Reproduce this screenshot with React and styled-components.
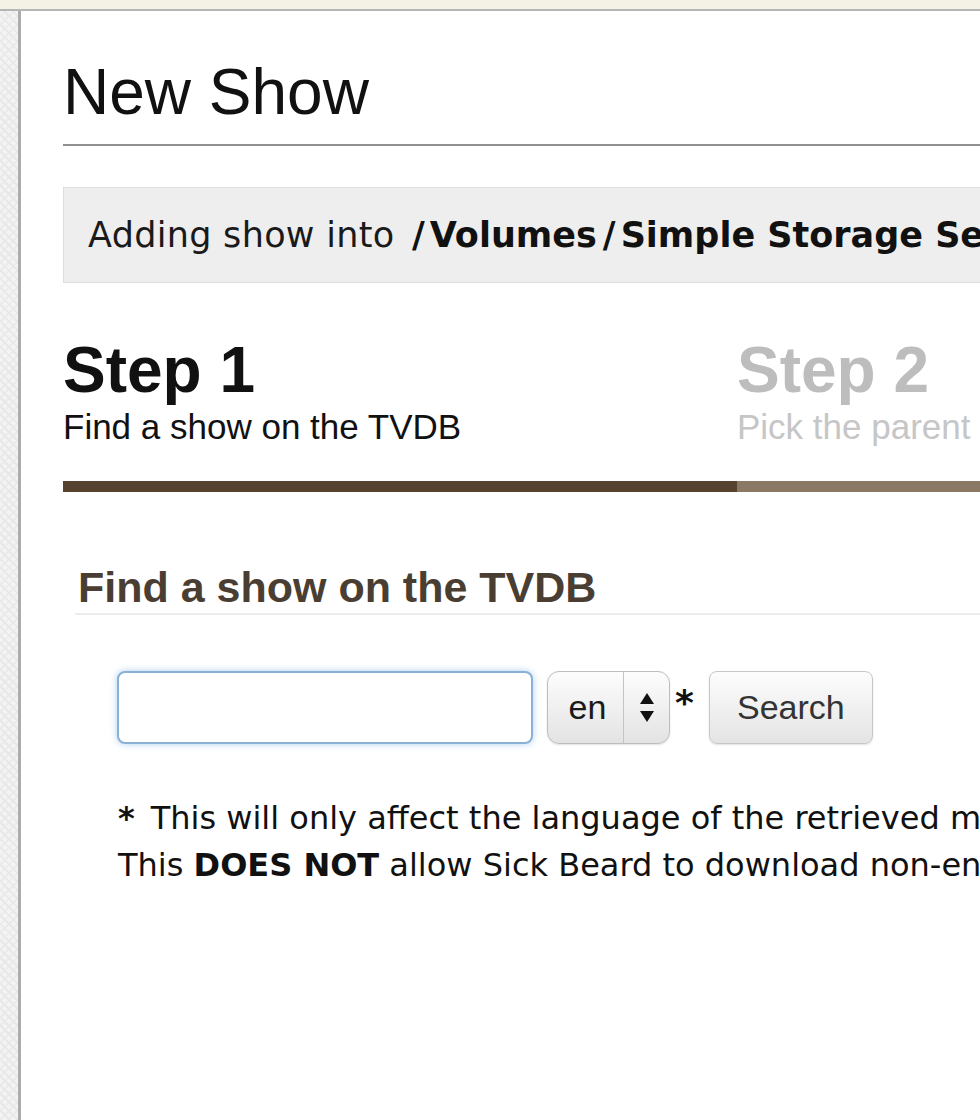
import styled, { createGlobalStyle } from 'styled-components';

const GlobalStyle = createGlobalStyle`
  html, body {
    margin: 0;
    padding: 0;
    background: #fff;
    overflow: hidden;
  }
  #root {
    width: 980px;
    height: 1120px;
    overflow: hidden;
  }
`;

const Page = styled.div`
  width: 980px;
  height: 1120px;
  display: flex;
  flex-direction: column;
  overflow: hidden;
`;

const TopStrip = styled.div`
  flex: none;
  height: 9px;
  background: #f4f1e5;
  border-bottom: 2px solid #b5b5b3;
`;

const Body = styled.div`
  flex: 1;
  display: flex;
  min-height: 0;
`;

const Gutter = styled.div`
  flex: none;
  width: 18px;
  border-right: 3px solid #acacac;
  background-color: #f3f3f3;
  background-image:
    repeating-linear-gradient(45deg, #e8e8e8 0 2px, transparent 2px 6px),
    repeating-linear-gradient(-45deg, #ebebeb 0 2px, transparent 2px 6px);
`;

const Main = styled.main`
  flex: none;
  width: 2100px;
  padding: 49px 0 0 42px;
  background: #fff;
`;

const Title = styled.h1`
  margin: 0;
  padding-bottom: 20px;
  border-bottom: 2px solid #909090;
  font: 400 64px/64px "Liberation Sans", Arial, sans-serif;
  color: #111;
`;

const InfoBox = styled.div`
  margin-top: 41px;
  height: 94px;
  padding-left: 24px;
  border: 1px solid #dddddd;
  background: #eeeeee;
  font: 35px/94px "DejaVu Sans", Verdana, sans-serif;
  letter-spacing: 0.3px;
  color: #1a1a1a;
  white-space: nowrap;
`;

const Path = styled.b`
  font-weight: 700;
  letter-spacing: 0;
  color: #111;
`;

/* Verdana's bold slash is much wider than DejaVu's */
const Slash = styled.span`
  margin: 0 5px 0 6px;
`;

const Steps = styled.div`
  display: grid;
  grid-template-columns: repeat(3, 674px);
  margin-top: 55px;
`;

const Step = styled.div`
  padding-bottom: 34px;
  border-bottom: 11px solid ${(p) => p.$bar};
`;

const StepTitle = styled.div`
  font: 700 64px/64px "Liberation Sans", Arial, sans-serif;
  color: ${(p) => (p.$active ? '#111' : '#bdbdbd')};
`;

const StepText = styled.div`
  margin-top: 5px;
  font: 400 35px/40px "Liberation Sans", Arial, sans-serif;
  color: ${(p) => (p.$active ? '#111' : '#c6c6c6')};
  white-space: nowrap;
`;

const Section = styled.section`
  margin: 74px 0 0 12px;
`;

const SectionHeading = styled.h2`
  margin: 0;
  padding: 0 0 5px 3px;
  border-bottom: 2px solid #ececec;
  font: 700 43px/42px "Liberation Sans", Arial, sans-serif;
  color: #4a3e33;
`;

const SearchRow = styled.div`
  display: flex;
  align-items: center;
  margin-top: 56px;
  padding-left: 42px;
`;

const SearchInput = styled.input`
  box-sizing: border-box;
  width: 416px;
  height: 73px;
  margin-right: 14px;
  padding: 0 14px;
  border: 2px solid #8bb0d6;
  border-radius: 8px;
  background: #fff;
  box-shadow: 0 0 7px rgba(110, 170, 230, 0.55);
  font: 32px "Liberation Sans", Arial, sans-serif;
  outline: none;
`;

const LangSelect = styled.div`
  box-sizing: border-box;
  display: flex;
  width: 123px;
  height: 73px;
  border: 1px solid #bdbdbd;
  border-radius: 12px;
  background: linear-gradient(#fdfdfd, #e3e3e3);
  box-shadow: 0 1px 2px rgba(0, 0, 0, 0.12);
`;

const LangValue = styled.span`
  display: flex;
  align-items: center;
  justify-content: center;
  width: 76px;
  padding-left: 4px;
  box-sizing: border-box;
  border-right: 1px solid #c4c4c4;
  font: 34px "Liberation Sans", Arial, sans-serif;
  color: #1a1a1a;
`;

const LangArrows = styled.span`
  flex: 1;
  display: flex;
  align-items: center;
  justify-content: center;
`;

const Asterisk = styled.span`
  padding: 0 15px 10px 5px;
  font: 700 36px/36px "DejaVu Sans", Verdana, sans-serif;
  color: #111;
`;

const Button = styled.button`
  box-sizing: border-box;
  width: 164px;
  height: 73px;
  border: 1px solid #c7c7c7;
  border-radius: 8px;
  background: linear-gradient(#fdfdfd, #e4e4e4);
  box-shadow: 0 1px 2px rgba(0, 0, 0, 0.12);
  font: 34px "Liberation Sans", Arial, sans-serif;
  color: #333;
  padding: 0;
`;

const Note = styled.p`
  margin: 51px 0 0;
  padding-left: 43px;
  font: 32px/47px "DejaVu Sans", Verdana, sans-serif;
  color: #111;
  white-space: nowrap;
`;

const NoteMark = styled.b`
  margin-right: 16px;
`;

const steps = [
  { title: 'Step 1', text: 'Find a show on the TVDB', bar: '#56432f', active: true },
  { title: 'Step 2', text: 'Pick the parent folder', bar: '#8a7964' },
  { title: 'Step 3', text: 'Customize options', bar: '#b3a796' },
];

const rootDir = '/Volumes/Simple Storage Service/TV Shows';

const UpDown = () => (
  <svg width="16" height="29" viewBox="0 0 16 29">
    <path d="M8 0 L15 11 L1 11 Z" fill="#111" />
    <path d="M1 18 L15 18 L8 29 Z" fill="#111" />
  </svg>
);

const DirPath = ({ path }) => (
  <Path>
    {path.split('/').map((part, i) => (
      <span key={i}>
        {i > 0 && <Slash>/</Slash>}
        {part}
      </span>
    ))}
  </Path>
);

export default function App() {
  return (
    <>
      <GlobalStyle />
      <Page>
        <TopStrip />
        <Body>
          <Gutter />
          <Main>
            <Title>New Show</Title>

            <InfoBox>
              Adding show into <DirPath path={rootDir} />
            </InfoBox>

            <Steps>
              {steps.map((s) => (
                <Step key={s.title} $bar={s.bar}>
                  <StepTitle $active={s.active}>{s.title}</StepTitle>
                  <StepText $active={s.active}>{s.text}</StepText>
                </Step>
              ))}
            </Steps>

            <Section>
              <SectionHeading>Find a show on the TVDB</SectionHeading>
              <SearchRow>
                <SearchInput type="text" />
                <LangSelect>
                  <LangValue>en</LangValue>
                  <LangArrows>
                    <UpDown />
                  </LangArrows>
                </LangSelect>
                <Asterisk>*</Asterisk>
                <Button>Search</Button>
              </SearchRow>
              <Note>
                <NoteMark>*</NoteMark>This will only affect the language of the retrieved metadata file contents and episode filenames.
                <br />
                This <b>DOES NOT</b> allow Sick Beard to download non-english TV episodes!
              </Note>
            </Section>
          </Main>
        </Body>
      </Page>
    </>
  );
}
